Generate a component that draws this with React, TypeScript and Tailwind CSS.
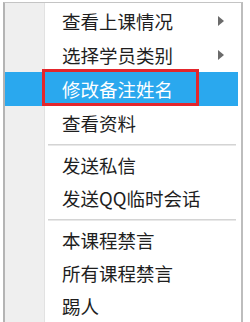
import React from "react";

type Item = { label: string; arrow?: boolean; active?: boolean };

const Arrow = () => (
  <span className="w-0 h-0 border-y-[5px] border-y-transparent border-l-[6px] border-l-[#6b6b6b]" />
);

const Row = ({ item, h }: { item: Item; h: string }) => (
  <div
    className={`flex items-center justify-between pl-[57px] pr-[14px] ${h} ${
      item.active ? "bg-[#2aa8ee] text-white" : "text-[#1e1e1e]"
    }`}
  >
    <span className="text-[18.5px] leading-none tracking-[0px]">{item.label}</span>
    {item.arrow ? <Arrow /> : null}
  </div>
);

const Sep = () => (
  <div className="h-[9px] flex items-center pl-[43px] pr-[2px]">
    <div className="h-[2px] w-full bg-[#d4d4d4] border-b border-b-[#e8e8e8]" />
  </div>
);

export default function App() {
  const g1: Item[] = [
    { label: "查看上课情况", arrow: true },
    { label: "选择学员类别", arrow: true },
    { label: "修改备注姓名", active: true },
    { label: "查看资料" },
  ];
  const g2: Item[] = [{ label: "发送私信" }, { label: "发送QQ临时会话" }];
  const g3: Item[] = [{ label: "本课程禁言" }, { label: "所有课程禁言" }, { label: "踢人" }];

  return (
    <div className="relative w-[250px] h-[322px] overflow-hidden bg-white font-['Microsoft_YaHei','Noto_Sans_CJK_SC',sans-serif]">
      <div className="ml-[3px] mt-[2px] w-[240px] h-[340px] border-l-2 border-t border-r-2 border-l-[#b4b4b4] border-t-[#c4c4c4] border-r-[#bdbdbd] bg-[linear-gradient(to_right,#efefef_0px,#efefef_39px,#e2e2e2_39px,#e2e2e2_40px,#ffffff_40px)] pt-[1px] pr-[3px]">
        {g1.map((it) => (
          <Row key={it.label} item={it} h="h-[34px]" />
        ))}
        <Sep />
        {g2.map((it) => (
          <Row key={it.label} item={it} h="h-[33px]" />
        ))}
        <Sep />
        {g3.map((it) => (
          <Row key={it.label} item={it} h="h-[33px]" />
        ))}
      </div>
      <div className="absolute left-[42px] top-[69px] w-[157px] h-[37px] border-[3px] border-[#e3262c]" />
    </div>
  );
}
